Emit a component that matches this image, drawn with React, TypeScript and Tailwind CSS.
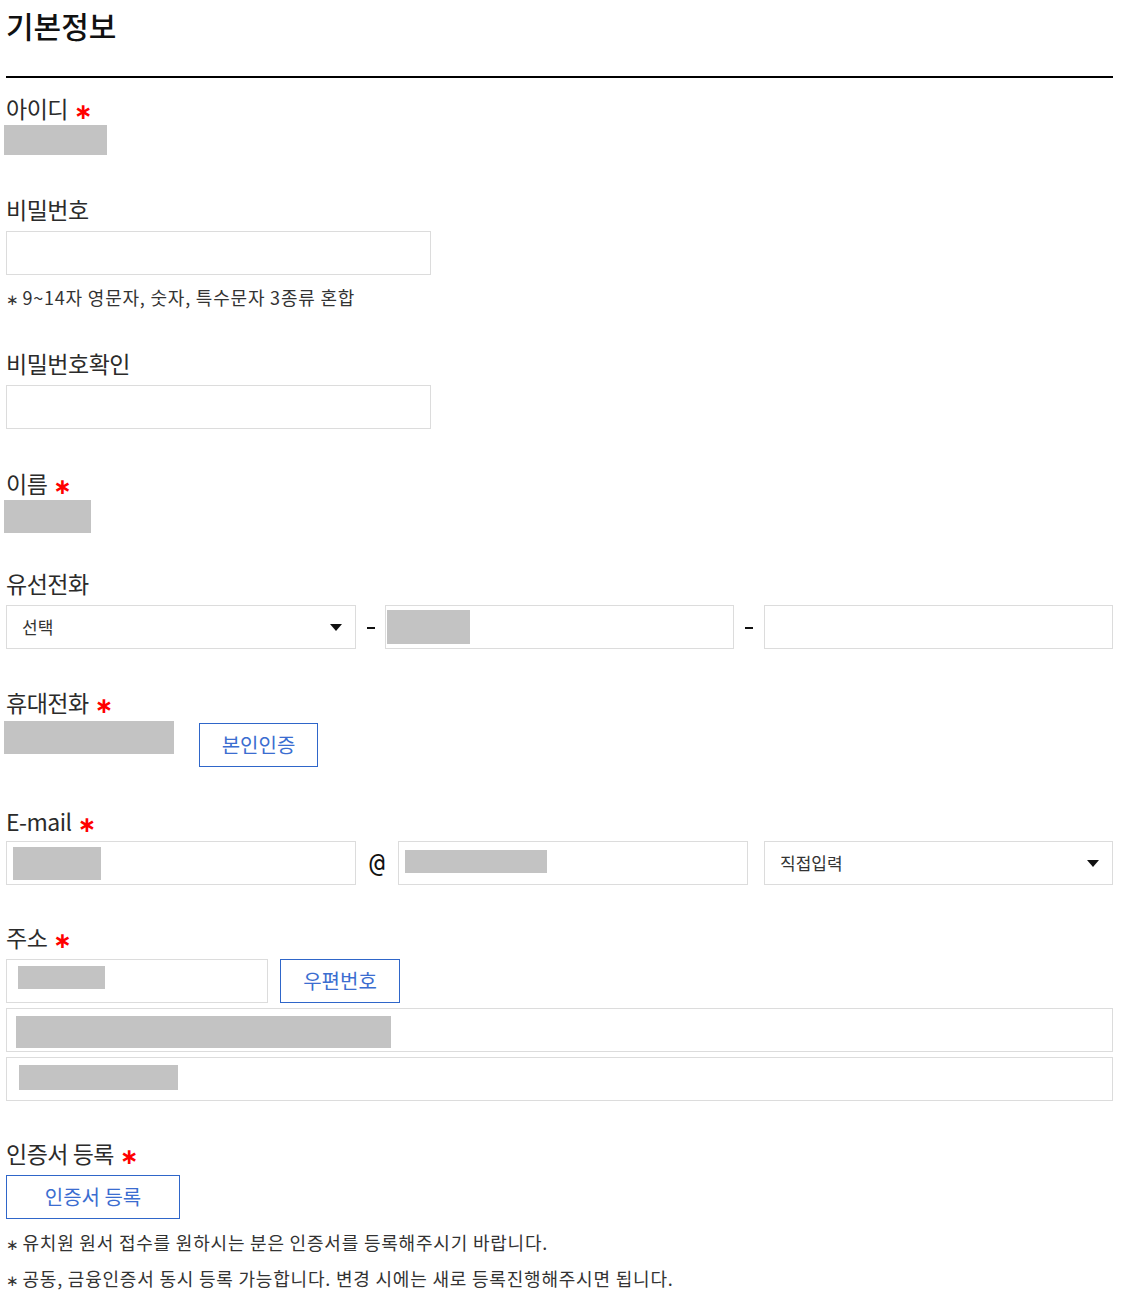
import React from 'react';

const FONT = { fontFamily: '"Noto Sans CJK KR", "Noto Sans", sans-serif' };

const Req = () => (
  <span className="ml-[6px] inline-block align-middle text-[22px] leading-none font-bold text-[#ff0000]" style={{ fontFamily: '"DejaVu Sans", sans-serif' }}>
    ∗
  </span>
);

const Label: React.FC<{ text: string; required?: boolean; className?: string }> = ({ text, required, className }) => (
  <div className={`h-[33px] text-[23px] leading-[33px] tracking-[-0.5px] text-[#2b2b2b] ${className || ''}`}>
    {text}
    {required && <Req />}
  </div>
);

const Note: React.FC<{ text: string; className?: string }> = ({ text, className }) => (
  <p className={`h-[26px] text-[18px] leading-[26px] tracking-[0.8px] text-[#333] ${className || ''}`}>
    <span className="mr-[-1px] inline-block text-[15px] leading-none tracking-normal" style={{ fontFamily: '"DejaVu Sans", sans-serif' }}>∗</span> {text}
  </p>
);

const Blank: React.FC<{ className: string }> = ({ className }) => <div className={`bg-[#c3c3c3] ${className}`} />;

const Box: React.FC<{ className?: string; children?: React.ReactNode }> = ({ className, children }) => (
  <div className={`relative h-[44px] border border-[#dcdcdc] bg-white ${className || ''}`}>{children}</div>
);

const Select: React.FC<{ value: string; className?: string }> = ({ value, className }) => (
  <Box className={`flex items-center justify-between pl-[15px] pr-[13px] ${className || ''}`}>
    <span className="text-[17px] text-[#333]">{value}</span>
    <svg width="12" height="7" viewBox="0 0 12 7">
      <path d="M0 0h12L6 7z" fill="#111" />
    </svg>
  </Box>
);

const BlueButton: React.FC<{ text: string; className?: string }> = ({ text, className }) => (
  <button className={`flex h-[44px] items-center justify-center border border-[#2f66c9] bg-white text-[20px] text-[#3b6dd0] ${className || ''}`}>
    {text}
  </button>
);

const Dash: React.FC<{ className: string }> = ({ className }) => (
  <span className={`flex justify-center ${className}`}>
    <span className="h-[2px] w-[8px] bg-[#111]" />
  </span>
);

export default function App() {
  return (
    <div className="min-h-[1302px] w-[1124px] bg-white px-[6px] pr-[11px]" style={FONT}>
      <div className="h-[78px] border-b-2 border-black">
        <h2 className="pt-[3px] text-[30px] leading-[45px] font-medium text-[#111]">기본정보</h2>
      </div>

      {/* 아이디 */}
      <Label text="아이디" required className="mt-[14px]" />
      <Blank className="-ml-[2px] h-[30px] w-[103px]" />

      {/* 비밀번호 */}
      <Label text="비밀번호" className="mt-[38px]" />
      <Box className="mt-[5px] w-[425px]" />
      <Note text="9~14자 영문자, 숫자, 특수문자 3종류 혼합" className="mt-[9px]" />

      {/* 비밀번호확인 */}
      <Label text="비밀번호확인" className="mt-[37px]" />
      <Box className="mt-[5px] w-[425px]" />

      {/* 이름 */}
      <Label text="이름" required className="mt-[38px]" />
      <Blank className="-ml-[2px] h-[33px] w-[87px]" />

      {/* 유선전화 */}
      <Label text="유선전화" className="mt-[34px]" />
      <div className="mt-[5px] flex items-center">
        <Select value="선택" className="w-[350px]" />
        <Dash className="w-[29px] pt-[2px]" />
        <Box className="w-[349px]">
          <Blank className="absolute top-[4px] left-[1px] h-[34px] w-[83px]" />
        </Box>
        <Dash className="w-[30px] pt-[2px]" />
        <Box className="flex-1" />
      </div>

      {/* 휴대전화 */}
      <Label text="휴대전화" required className="mt-[37px]" />
      <div className="mt-[2px] flex items-start">
        <Blank className="-ml-[2px] h-[33px] w-[170px]" />
        <BlueButton text="본인인증" className="mt-[2px] ml-[25px] w-[119px]" />
      </div>

      {/* E-mail */}
      <Label text="E-mail" required className="mt-[38px]" />
      <div className="mt-[3px] flex items-center">
        <Box className="w-[350px]">
          <Blank className="absolute top-[5px] left-[6px] h-[33px] w-[88px]" />
        </Box>
        <span className="w-[42px] text-center text-[26px] leading-none text-[#111]" style={{ fontFamily: '"DejaVu Sans Mono", monospace' }}>@</span>
        <Box className="w-[350px]">
          <Blank className="absolute top-[8px] left-[6px] h-[23px] w-[142px]" />
        </Box>
        <Select value="직접입력" className="ml-[16px] flex-1" />
      </div>

      {/* 주소 */}
      <Label text="주소" required className="mt-[36px]" />
      <div className="mt-[5px] flex items-center">
        <Box className="w-[262px]">
          <Blank className="absolute top-[6px] left-[11px] h-[23px] w-[87px]" />
        </Box>
        <BlueButton text="우편번호" className="ml-[12px] w-[120px]" />
      </div>
      <Box className="mt-[5px]">
        <Blank className="absolute top-[7px] left-[9px] h-[32px] w-[375px]" />
      </Box>
      <Box className="mt-[5px]">
        <Blank className="absolute top-[7px] left-[12px] h-[25px] w-[159px]" />
      </Box>

      {/* 인증서 등록 */}
      <Label text="인증서 등록" required className="mt-[36px]" />
      <BlueButton text="인증서 등록" className="mt-[5px] h-[43px] w-[174px]" />
      <Note text="유치원 원서 접수를 원하시는 분은 인증서를 등록해주시기 바랍니다." className="mt-[10px]" />
      <Note text="공동, 금융인증서 동시 등록 가능합니다. 변경 시에는 새로 등록진행해주시면 됩니다." className="mt-[10px]" />
    </div>
  );
}
